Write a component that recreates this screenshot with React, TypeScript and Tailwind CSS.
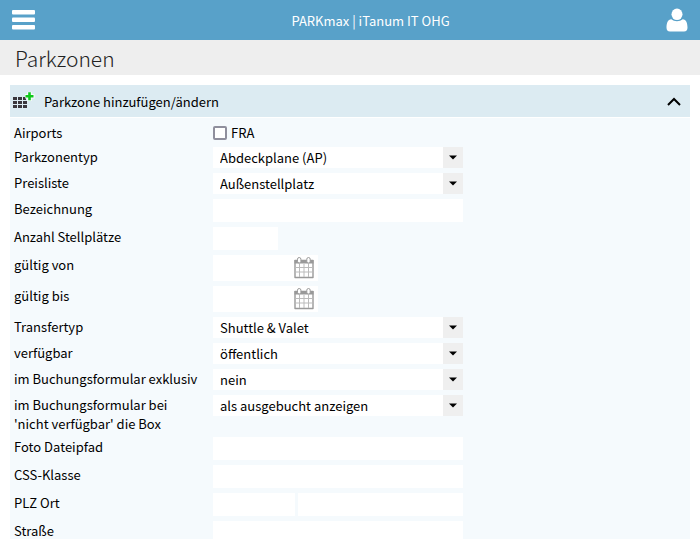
import React, { useState } from 'react';
import clsx from 'clsx';

interface FieldRowProps {
  label: string;
  htmlFor: string;
  children: React.ReactNode;
}

const FieldRow: React.FC<FieldRowProps> = ({ label, htmlFor, children }) => (
  <div className="flex items-start">
    <label htmlFor={htmlFor} className="w-[199px] shrink-0 pr-3 leading-[19px]">
      {label}
    </label>
    <div className="flex min-w-0 pb-px">{children}</div>
  </div>
);

interface SelectFieldProps {
  id: string;
  options: string[];
}

const SelectField: React.FC<SelectFieldProps> = ({ id, options }) => (
  <div className="relative w-[250px]">
    <select
      id={id}
      className="block h-[21px] w-full appearance-none bg-white pr-6 pl-[7px] leading-[21px] outline-none"
    >
      {options.map((option) => (
        <option key={option}>{option}</option>
      ))}
    </select>
    {/* Arrow box */}
    <span className="pointer-events-none absolute inset-y-0 right-0 flex w-5 items-center justify-center bg-[#efefef]">
      <svg width="8" height="5" viewBox="0 0 8 5">
        <path d="M0 0.5h8L4 4.5z" fill="#000" />
      </svg>
    </span>
  </div>
);

interface TextFieldProps {
  id: string;
  className: string;
  label?: string;
}

const TextField: React.FC<TextFieldProps> = ({ id, className, label }) => (
  <input
    id={id}
    type="text"
    aria-label={label}
    className={clsx('block h-[23px] bg-white px-1.5 outline-none', className)}
  />
);

const CalendarIcon = () => (
  <svg width="20" height="22" viewBox="0 0 20 22" fill="none">
    <path d="M1 3.5h18v17H1z" fill="#fff" stroke="#999" strokeWidth="1.4" strokeLinejoin="round" />
    <path d="M0.5 3h19v3.5h-19z" fill="#999" />
    <path d="M5.5 7v13M10 7v13M14.5 7v13M1.5 10.5h17M1.5 15h17" stroke="#bbb" />
    <rect x="3.5" y="0.5" width="3.4" height="5.5" rx="1.7" fill="#fff" stroke="#999" />
    <rect x="12.8" y="0.5" width="3.4" height="5.5" rx="1.7" fill="#fff" stroke="#999" />
  </svg>
);

const DateField: React.FC<{ id: string; label: string }> = ({ id, label }) => (
  <div className="flex h-[26px] w-[105px] items-center bg-white pr-1">
    <input id={id} type="text" className="h-full w-20 min-w-0 flex-1 px-1.5 outline-none" />
    <button type="button" aria-label={`Kalender ${label}`} className="shrink-0">
      <CalendarIcon />
    </button>
  </div>
);

const ZoneAddIcon = () => (
  <svg width="22" height="18" viewBox="0 0 22 18">
    <path
      d="M0 5h4v3H0zM5 5h4v3H5zM10 5h3v3h-3zM0 9h4v3H0zM5 9h4v3H5zM10 9h4v3h-4zM0 13h4v3H0zM5 13h4v3H5zM10 13h4v3h-4z"
      fill="#3a363c"
    />
    <path d="M16.5 0v9M12 4.2h9.5" stroke="#fff" strokeWidth="4.5" opacity="0.8" />
    <path d="M16.5 0.2v8M12.5 4.2h8" stroke="#10c81c" strokeWidth="2.6" />
  </svg>
);

export default function App() {
  const [open, setOpen] = useState(true);
  const [fra, setFra] = useState(false);

  return (
    <div className="min-h-screen bg-white font-['Noto_Sans_CJK_SC','Noto_Sans',sans-serif] text-[13px] text-black">
      {/* Top bar */}
      <header className="flex h-10 items-center bg-[#58a1c9] px-3 text-white">
        <button type="button" aria-label="Menü">
          <svg width="23" height="20" viewBox="0 0 23 20" fill="#fff">
            <rect y="0" width="23" height="4.5" rx="1" />
            <rect y="7.5" width="23" height="4.5" rx="1" />
            <rect y="15" width="23" height="4.5" rx="1" />
          </svg>
        </button>
        <span className="flex-1 pt-0.5 pl-10 text-center leading-5">PARKmax | iTanum IT OHG</span>
        <button type="button" aria-label="Benutzer">
          <svg width="22" height="24" viewBox="0 0 22 24" fill="#fff">
            <path d="M5.3 11.2C1.8 11.6 0.5 15 0.5 19.5C0.5 22 1.6 23.5 4 23.5H18C20.4 23.5 21.5 22 21.5 19.5C21.5 15 20.2 11.6 16.7 11.2C13.8 13.8 8.2 13.8 5.3 11.2Z" />
            <ellipse cx="11" cy="6.3" rx="5.5" ry="5.8" />
          </svg>
        </button>
      </header>

      <div className="flex h-[35px] items-center bg-[#eee] px-[15px]">
        <h1 className="text-[21px] leading-8 font-light text-[#222]">Parkzonen</h1>
      </div>

      <main className="px-2.5 pt-2.5">
        <button
          type="button"
          aria-expanded={open}
          onClick={() => setOpen(!open)}
          className="flex h-8 w-full items-center bg-[#dcebf2] pr-2 pl-[3px] text-left"
        >
          <ZoneAddIcon />
          <span className="ml-[9px] flex-1 pt-0.5">Parkzone hinzufügen/ändern</span>
          <svg width="16" height="10" viewBox="0 0 16 10" fill="none" className={clsx(!open && 'rotate-180')}>
            <path d="M2 9L8 3L14 9" stroke="#000" strokeWidth="2" />
          </svg>
        </button>

        {open && (
          <form className="mt-px flex flex-col gap-1 bg-[#f5fafd] pt-[5px] pb-2 pl-1">
            <FieldRow label="Airports" htmlFor="fra">
              <span className="flex items-center gap-1 leading-[19px]">
                <input
                  id="fra"
                  type="checkbox"
                  checked={fra}
                  onChange={(e) => setFra(e.target.checked)}
                  className="size-3.5 appearance-none rounded-xs border-2 border-[#8f8f9d] bg-white checked:bg-[#0060df]"
                />
                <label htmlFor="fra">FRA</label>
              </span>
            </FieldRow>
            <FieldRow label="Parkzonentyp" htmlFor="typ">
              <SelectField id="typ" options={['Abdeckplane (AP)']} />
            </FieldRow>
            <FieldRow label="Preisliste" htmlFor="preisliste">
              <SelectField id="preisliste" options={['Außenstellplatz']} />
            </FieldRow>
            <FieldRow label="Bezeichnung" htmlFor="bezeichnung">
              <TextField id="bezeichnung" className="w-[250px]" />
            </FieldRow>
            <FieldRow label="Anzahl Stellplätze" htmlFor="anzahl">
              <TextField id="anzahl" className="w-[65px]" />
            </FieldRow>
            <FieldRow label="gültig von" htmlFor="von">
              <DateField id="von" label="gültig von" />
            </FieldRow>
            <FieldRow label="gültig bis" htmlFor="bis">
              <DateField id="bis" label="gültig bis" />
            </FieldRow>
            <FieldRow label="Transfertyp" htmlFor="transfertyp">
              <SelectField id="transfertyp" options={['Shuttle & Valet']} />
            </FieldRow>
            <FieldRow label="verfügbar" htmlFor="verfuegbar">
              <SelectField id="verfuegbar" options={['öffentlich']} />
            </FieldRow>
            <FieldRow label="im Buchungsformular exklusiv" htmlFor="exklusiv">
              <SelectField id="exklusiv" options={['nein']} />
            </FieldRow>
            <FieldRow label="im Buchungsformular bei 'nicht verfügbar' die Box" htmlFor="box">
              <SelectField id="box" options={['als ausgebucht anzeigen']} />
            </FieldRow>
            <FieldRow label="Foto Dateipfad" htmlFor="foto">
              <TextField id="foto" className="w-[250px]" />
            </FieldRow>
            <FieldRow label="CSS-Klasse" htmlFor="css">
              <TextField id="css" className="w-[250px]" />
            </FieldRow>
            <FieldRow label="PLZ Ort" htmlFor="plz">
              <div className="flex gap-[3px]">
                <TextField id="plz" className="w-[82px]" />
                <TextField id="ort" label="Ort" className="w-[165px]" />
              </div>
            </FieldRow>
            <FieldRow label="Straße" htmlFor="strasse">
              <TextField id="strasse" className="w-[250px]" />
            </FieldRow>
          </form>
        )}
      </main>
    </div>
  );
}
